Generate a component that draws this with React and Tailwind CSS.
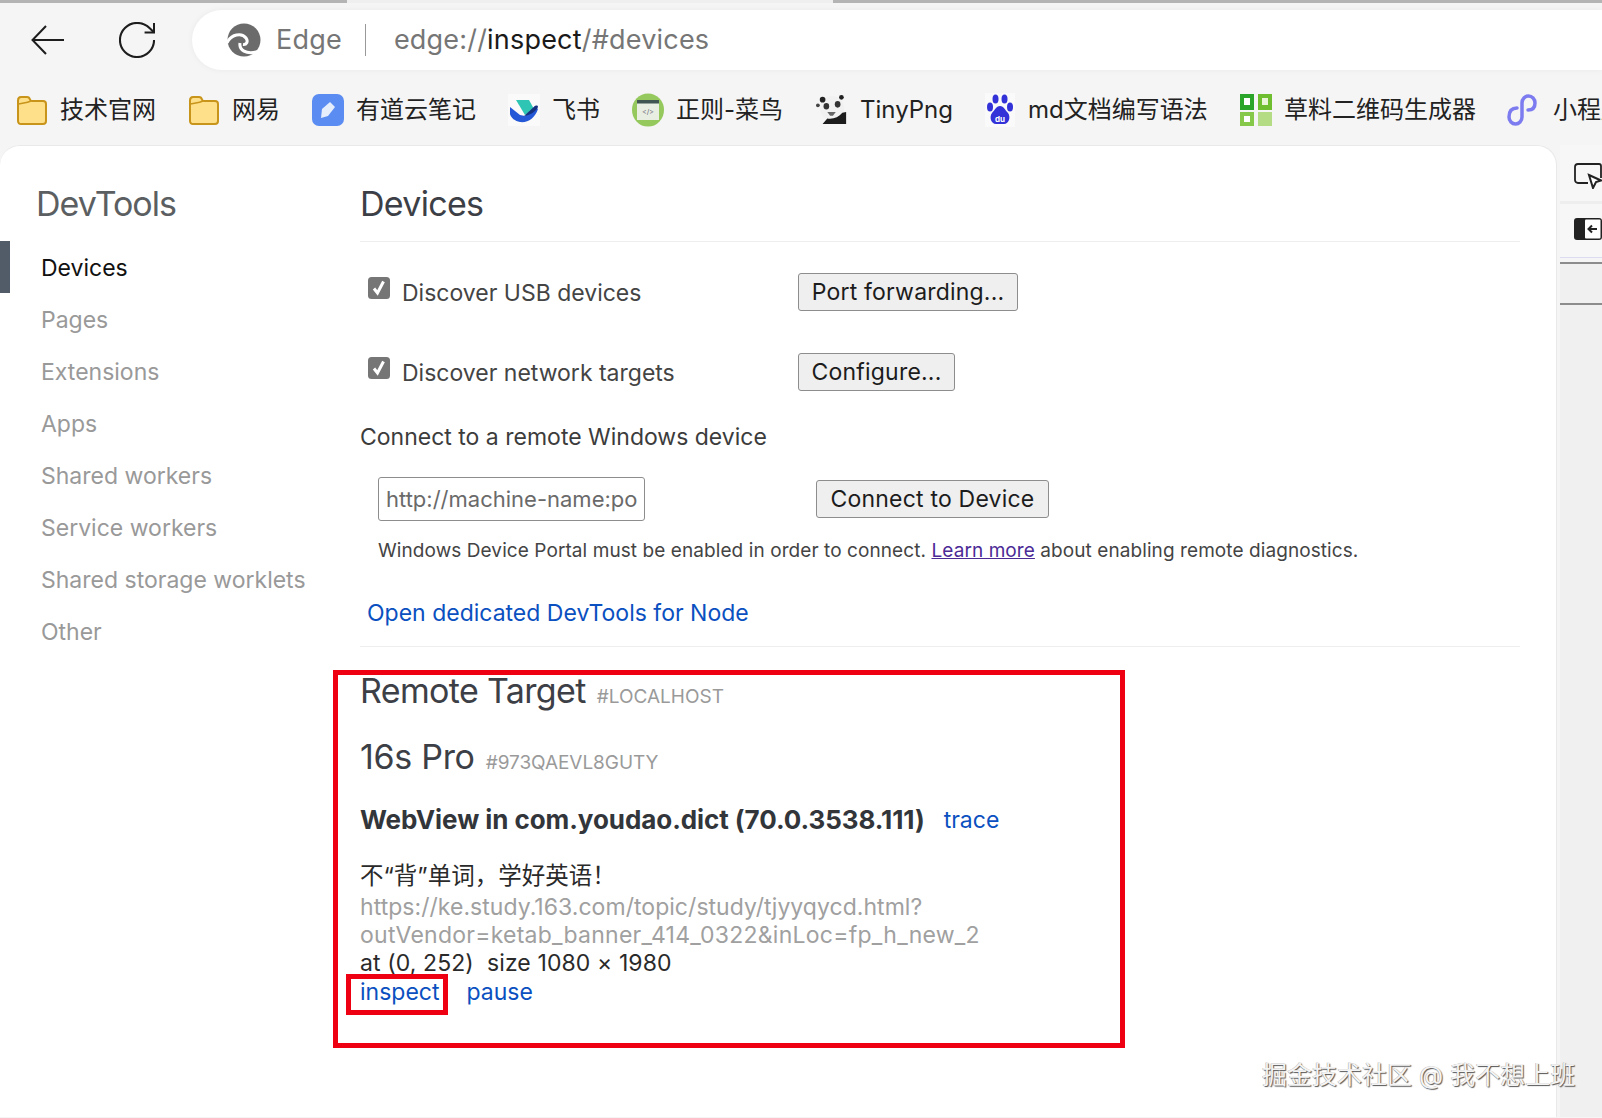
import React from "react";

const FONT = "font-['Inter','Noto_Sans_CJK_SC',sans-serif]";

function EdgeLogo() {
  return (
    <svg width="34" height="34" viewBox="0 0 34 34" fill="none" className="-ml-[1px] -mr-[1px]">
      <circle cx="17" cy="17" r="16.500" fill="#6b6b6b" />
      <path d="M0 20C4 11 15 9.500 19 15c2.500 3.500.5 7-3 6.500" stroke="#fff" strokeWidth="3" />
      <path d="M13 20c-1 6 5 13 20 8" stroke="#fff" strokeWidth="3" />
    </svg>
  );
}

function Folder() {
  return (
    <svg width="32" height="30" viewBox="0 0 32 30">
      <path d="M2 5.5C2 3.5 3.2 2 5 2h6c1.6 0 2.6 1 3 2.6.2.8.8 1.4 1.8 1.4H27c1.8 0 3 1.2 3 3v17c0 1.8-1.200 3-3 3H5c-1.800 0-3-1.200-3-3z" fill="#ffe08a" stroke="#c8941a" strokeWidth="2" />
      <path d="M2 9c4-1 9-1 13-3" fill="none" stroke="#c8941a" strokeWidth="1.500" />
    </svg>
  );
}
function Youdao() {
  return (
    <svg width="32" height="32" viewBox="0 0 32 32">
      <rect width="32" height="32" rx="7" fill="#5a8cf2" />
      <path d="M9 24l1-9 8-7 5 5-7 9z" fill="#e6eefc" />
    </svg>
  );
}
function Feishu() {
  return (
    <svg width="32" height="32" viewBox="0 0 32 32">
      <rect width="32" height="32" fill="#fafafa" />
      <path d="M8 6h13l5 9-9 6z" fill="#2fc5b4" />
      <path d="M2 13l10 8 5 1 10-10 3 3c-3 9-10 14-18 13-5-1-9-4-10-8z" fill="#2458d6" />
      <path d="M16 22l11-10c2-1 3 0 3 1-2 4-7 8-14 9z" fill="#16327e" />
    </svg>
  );
}
function Runoob() {
  return (
    <svg width="32" height="34" viewBox="0 0 32 34">
      <ellipse cx="16" cy="17" rx="16" ry="16.500" fill="#95c95e" />
      <rect x="5" y="7" width="22" height="20" fill="#e8eee2" />
      <rect x="5" y="7" width="22" height="3.500" fill="#3f5750" />
      <text x="16" y="21" fontSize="7" textAnchor="middle" fill="#667">{"</>"}</text>
    </svg>
  );
}
function Panda() {
  return (
    <svg width="34" height="32" viewBox="0 0 34 32">
      <circle cx="17" cy="14" r="13" fill="#f1f1f1" />
      <path d="M7 31l5-6c6 1 12-1 16-6l4-1v13z" fill="#1c1c1c" />
      <circle cx="7" cy="5" r="3" fill="#222" />
      <circle cx="27" cy="2.500" r="2.500" fill="#222" />
      <circle cx="2" cy="11" r="2" fill="#444" />
      <ellipse cx="11" cy="12" rx="3" ry="3.500" fill="#333" />
      <ellipse cx="23" cy="10" rx="3" ry="3.500" fill="#333" />
      <path d="M12 18h9l-3 4h-3z" fill="#666" />
    </svg>
  );
}
function Baidu() {
  return (
    <svg width="30" height="34" viewBox="0 0 30 34">
      <rect width="30" height="34" fill="#fafafa" />
      <g fill="#3232d8">
        <ellipse cx="10.500" cy="6" rx="3" ry="4.500" />
        <ellipse cx="19.500" cy="6" rx="3" ry="4.500" />
        <ellipse cx="5" cy="14" rx="3" ry="4.500" />
        <ellipse cx="25" cy="14" rx="3" ry="4.500" />
        <path d="M15 13c4 0 5 4 8 7 3 4 1 11-4 11h-8c-5 0-7-7-4-11 3-3 4-7 8-7z" />
      </g>
      <text x="15" y="29" fontSize="8" fontWeight="700" textAnchor="middle" fill="#fff">du</text>
    </svg>
  );
}
function Qr() {
  return (
    <svg width="32" height="32" viewBox="0 0 32 32">
      <path d="M0 0h14v16H0z" fill="#2aa52a" />
      <path d="M18 0h14v16H18z" fill="#6fbe2f" />
      <path d="M0 18h14v14H0z" fill="#86c84a" />
      <path d="M18 18h14v14H18z" fill="#b4dc84" />
      <rect x="4" y="4" width="6" height="7" fill="#fff" />
      <rect x="22" y="4" width="6" height="7" fill="#eaf5d8" />
      <rect x="4" y="22" width="6" height="6" fill="#fff" />
    </svg>
  );
}
function Mini() {
  return (
    <svg width="32" height="34" viewBox="0 0 32 34" fill="none" stroke="#7c7cf0" strokeWidth="3.500" strokeLinecap="round">
      <path d="M11 15C5 15 3 19 3 24c0 4 3 7 6.500 7s6.500-3 6.500-7V10c0-4 3-7 6.500-7s6.500 3 6.500 7c0 5-3 7-7 7" />
    </svg>
  );
}

function Bookmark({ icon, label, width, labelClass = "" }) {
  return (
    <div className={`flex items-center gap-[12px] shrink-0 ${width}`}>
      <div className="w-[32px] flex justify-center shrink-0">{icon}</div>
      <span className={`text-[24px] leading-[32px] text-[#222] whitespace-nowrap ${labelClass}`}>{label}</span>
    </div>
  );
}

function GrayBtn({ children, width }) {
  return (
    <button className={`${width} h-[38px] shrink-0 rounded-[3px] border border-[#8d8d8d] bg-[#efefef] text-[23px] leading-none text-[#1c1c1c] tracking-[0.2px] text-center`}>
      {children}
    </button>
  );
}

function Check() {
  return (
    <svg width="22" height="22" viewBox="0 0 22 22" className="shrink-0">
      <rect width="22" height="22" rx="3.500" fill="#767676" />
      <path d="M6 11.500l3.500 4.500L15.500 4.500" fill="none" stroke="#fff" strokeWidth="3" />
    </svg>
  );
}

const NAV = ["Pages", "Extensions", "Apps", "Shared workers", "Service workers", "Shared storage worklets", "Other"];

export default function App() {
  return (
    <div className={`${FONT} relative w-[1602px] h-[1118px] overflow-hidden bg-[#f5f5f5]`}>
      {/* top tab strip */}
      <div className="flex h-[3px]">
        <div className="w-[347px] bg-[#b4b4b4]" />
        <div className="w-[486px] bg-[#efefef]" />
        <div className="flex-1 bg-[#b4b4b4]" />
      </div>

      {/* toolbar */}
      <div className="h-[79px] flex items-start">
        <div className="flex items-center pl-[31px] w-[192px] h-[60px] mt-[7px] shrink-0 gap-[54px]">
          <svg width="34" height="30" viewBox="0 0 34 30" fill="none" stroke="#1d1d1d" strokeWidth="2">
            <path d="M33 15H3M15 1L1.500 15 15 29" />
          </svg>
          <svg width="36" height="36" viewBox="2.500 2.500 19 19" fill="none" stroke="#1d1d1d" strokeWidth="1.100">
            <path d="M21 12a9 9 0 1 1-9-9c2.520 0 4.930 1 6.740 2.740L21 8" />
            <path d="M21 3v5h-5" />
          </svg>
        </div>
        <div className="flex-1 h-[60px] mt-[7px] bg-white rounded-l-[30px] flex items-center pl-[36px] shadow-[0_0_6px_rgba(0,0,0,0.05)] text-[27px] text-[#767676]">
          <EdgeLogo />
          <span className="ml-[16px] tracking-[0.2px]">Edge</span>
          <div className="w-px h-[32px] bg-[#999] ml-[23px] mr-[28px]" />
          <span className="tracking-[0.2px]">edge://<span className="text-[#1a1a1a]">inspect</span>/#devices</span>
        </div>
      </div>

      {/* bookmarks */}
      <div className="h-[64px] mb-[3px] flex items-center pl-[16px] -mt-[4px]">
        <Bookmark icon={<Folder />} label="技术官网" width="w-[172px]" />
        <Bookmark icon={<Folder />} label="网易" width="w-[124px]" />
        <Bookmark icon={<Youdao />} label="有道云笔记" width="w-[196px]" />
        <Bookmark icon={<Feishu />} label="飞书" width="w-[124px]" />
        <Bookmark icon={<Runoob />} label="正则-菜鸟" width="w-[184px]" />
        <Bookmark icon={<Panda />} label="TinyPng" width="w-[168px]" />
        <Bookmark icon={<Baidu />} label="md文档编写语法" width="w-[256px]" />
        <Bookmark icon={<Qr />} label="草料二维码生成器" width="w-[266px]" />
        <Bookmark icon={<Mini />} label="小程序" width="w-[140px]" labelClass="ml-[3px]" />
      </div>

      {/* body */}
      <div className="flex h-[972px]">
        <div className="w-[1557px] shrink-0 bg-white rounded-t-[20px] border-t border-r border-[#e9e9e9] flex">
          {/* sidebar */}
          <aside className="w-[360px] shrink-0 pt-[34px]">
            <h1 className="pl-[36px] text-[34px] leading-[48px] font-normal text-[#5c5f62] tracking-[-1px]">DevTools</h1>
            <nav className="mt-[13px] flex flex-col">
              <div className="h-[52px] flex items-center border-l-[10px] border-[#525c68] pl-[31px] pt-[2px] text-[23px] text-[#111]">Devices</div>
              {NAV.map((n) => (
                <div key={n} className="h-[52px] flex items-center pl-[41px] pt-[2px] text-[23px] text-[#999]">{n}</div>
              ))}
            </nav>
          </aside>

          {/* main */}
          <main className="w-[1160px] shrink-0 pt-[34px]">
            <h2 className="text-[34px] leading-[48px] text-[#3c4046] tracking-[-0.7px] pb-[13px] border-b border-[#eeeeee] h-[62px]">Devices</h2>

            <div className="flex items-center h-[38px] mt-[31px] pl-[8px]">
              <div className="w-[430px] flex items-center gap-[12px]">
                <div className="-mt-[9px]"><Check /></div>
                <span className="text-[23px] text-[#444] mt-[3px]">Discover USB devices</span>
              </div>
              <GrayBtn width="w-[220px]">Port forwarding...</GrayBtn>
            </div>
            <div className="flex items-center h-[40px] mt-[41px] pl-[8px]">
              <div className="w-[430px] flex items-center gap-[12px]">
                <div className="-mt-[9px]"><Check /></div>
                <span className="text-[23px] text-[#444] mt-[2px]">Discover network targets</span>
              </div>
              <GrayBtn width="w-[157px]">Configure...</GrayBtn>
            </div>

            <div className="mt-[28px] h-[34px] flex items-center text-[23px] text-[#3c3c3c]">Connect to a remote Windows device</div>

            <div className="flex items-center mt-[23px] pl-[18px] h-[44px]">
              <div className="w-[267px] h-[44px] rounded-[3px] border border-[#8d8d8d] px-[7px] flex items-center overflow-hidden text-[22px] text-[#6a6a6a] whitespace-nowrap shrink-0">http://machine-name:po</div>
              <div className="ml-[171px]"><GrayBtn width="w-[233px]">Connect to Device</GrayBtn></div>
            </div>
            <p className="mt-[17px] pl-[18px] text-[19px] leading-[26px] text-[#444] tracking-[0.08px]">
              Windows Device Portal must be enabled in order to connect. <span className="text-[#4c2a96] underline">Learn more</span> about enabling remote diagnostics.
            </p>

            <div className="mt-[32px] pl-[7px] h-[34px] flex items-center text-[23px] text-[#0b50c0]">Open dedicated DevTools for Node</div>
            <div className="mt-[16px] h-px bg-[#eeeeee]" />

            {/* annotated block */}
            <section className="mt-[23px] -ml-[27px] w-[792px] h-[378px] border-[5px] border-[#ee0012] pl-[22px]">
              <div className="flex items-baseline h-[42px] leading-[42px] -mt-[5px]">
                <span className="text-[34px] text-[#3c4046] tracking-[-0.65px]">Remote Target</span>
                <span className="ml-[11px] text-[19px] text-[#9a9a9a]">#LOCALHOST</span>
              </div>
              <div className="flex items-baseline h-[42px] leading-[42px] mt-[24px]">
                <span className="text-[34px] text-[#3c4046] tracking-[-0.3px]">16s Pro</span>
                <span className="ml-[11px] text-[19px] text-[#9a9a9a] tracking-[-0.05px]">#973QAEVL8GUTY</span>
              </div>
              <div className="flex items-baseline mt-[24px] h-[36px] leading-[36px]">
                <span className="text-[26px] font-bold text-[#32363a] tracking-[-0.07px]">WebView in com.youdao.dict (70.0.3538.111)</span>
                <span className="ml-[19px] text-[23px] text-[#0b50c0] -translate-y-[1px]">trace</span>
              </div>
              <div className="mt-[24px] text-[23.5px] leading-[28px] text-[#2a2a2a]">不“背”单词，学好英语！</div>
              <div className="text-[23px] leading-[28px] text-[#a0a0a0] mt-[3px]">
                <div className="tracking-[0.04px]">https://ke.study.163.com/topic/study/tjyyqycd.html?</div>
                <div className="tracking-[0.25px]">outVendor=ketab_banner_414_0322&amp;inLoc=fp_h_new_2</div>
              </div>
              <div className="text-[23px] leading-[28px] text-[#2a2a2a] whitespace-pre tracking-[0.1px]">at (0, 252)  size 1080 × 1980</div>
              <div className="flex items-center h-[28px] mt-[1px] text-[23px] text-[#0b50c0]">
                <span className="relative">
                  inspect
                  <span className="absolute -left-[14px] -top-[1px] -right-[9px] -bottom-[6px] border-[5px] border-[#ee0012]" />
                </span>
                <span className="ml-[27px]">pause</span>
              </div>
            </section>
          </main>
        </div>

        {/* right rail */}
        <div className="flex-1 ml-[3px] flex flex-col">
          <div className="h-[56px] bg-[#f7f7f7] pl-[14px] pt-[18px] overflow-hidden">
            <svg width="28" height="26" viewBox="0 0 28 26" fill="none" stroke="#222" strokeWidth="1.800">
              <path d="M14 20H4a3 3 0 0 1-3-3V4a3 3 0 0 1 3-3h21a2 2 0 0 1 2 2v12" />
              <path d="M15 12l12 5.500-5 1.500-3 6z" fill="#fff" strokeWidth="2" />
            </svg>
          </div>
          <div className="h-[3px] bg-[#eeeeee]" />
          <div className="h-[53px] bg-[#f7f7f7] pl-[14px] pt-[14px] overflow-hidden">
            <svg width="28" height="22" viewBox="0 0 28 22">
              <rect x="0" y="0" width="28" height="22" rx="3" fill="#222" />
              <rect x="11" y="1.500" width="15.500" height="19" rx="1" fill="#fff" />
              <path d="M23 11h-8M18 7.500L14.500 11 18 14.500" fill="none" stroke="#222" strokeWidth="2" />
            </svg>
          </div>
          <div className="h-px bg-[#dcdcf0]" />
          <div className="h-[4px] bg-[#f5f5f5]" />
          <div className="h-[2px] bg-[#8c8c8c]" />
          <div className="h-[39px] bg-[#f0f0f0]" />
          <div className="h-[2px] bg-[#8c8c8c]" />
          <div className="flex-1 bg-[#f0f0f0]" />
        </div>
      </div>

      {/* watermark */}
      <div className="absolute left-[1262px] top-[1058px] text-[25px] leading-[34px] text-[#f4f4f4] [text-shadow:1px_1px_1px_#555,-0.5px_-0.5px_0.5px_#aaa] whitespace-nowrap">掘金技术社区 @ 我不想上班</div>
    </div>
  );
}
